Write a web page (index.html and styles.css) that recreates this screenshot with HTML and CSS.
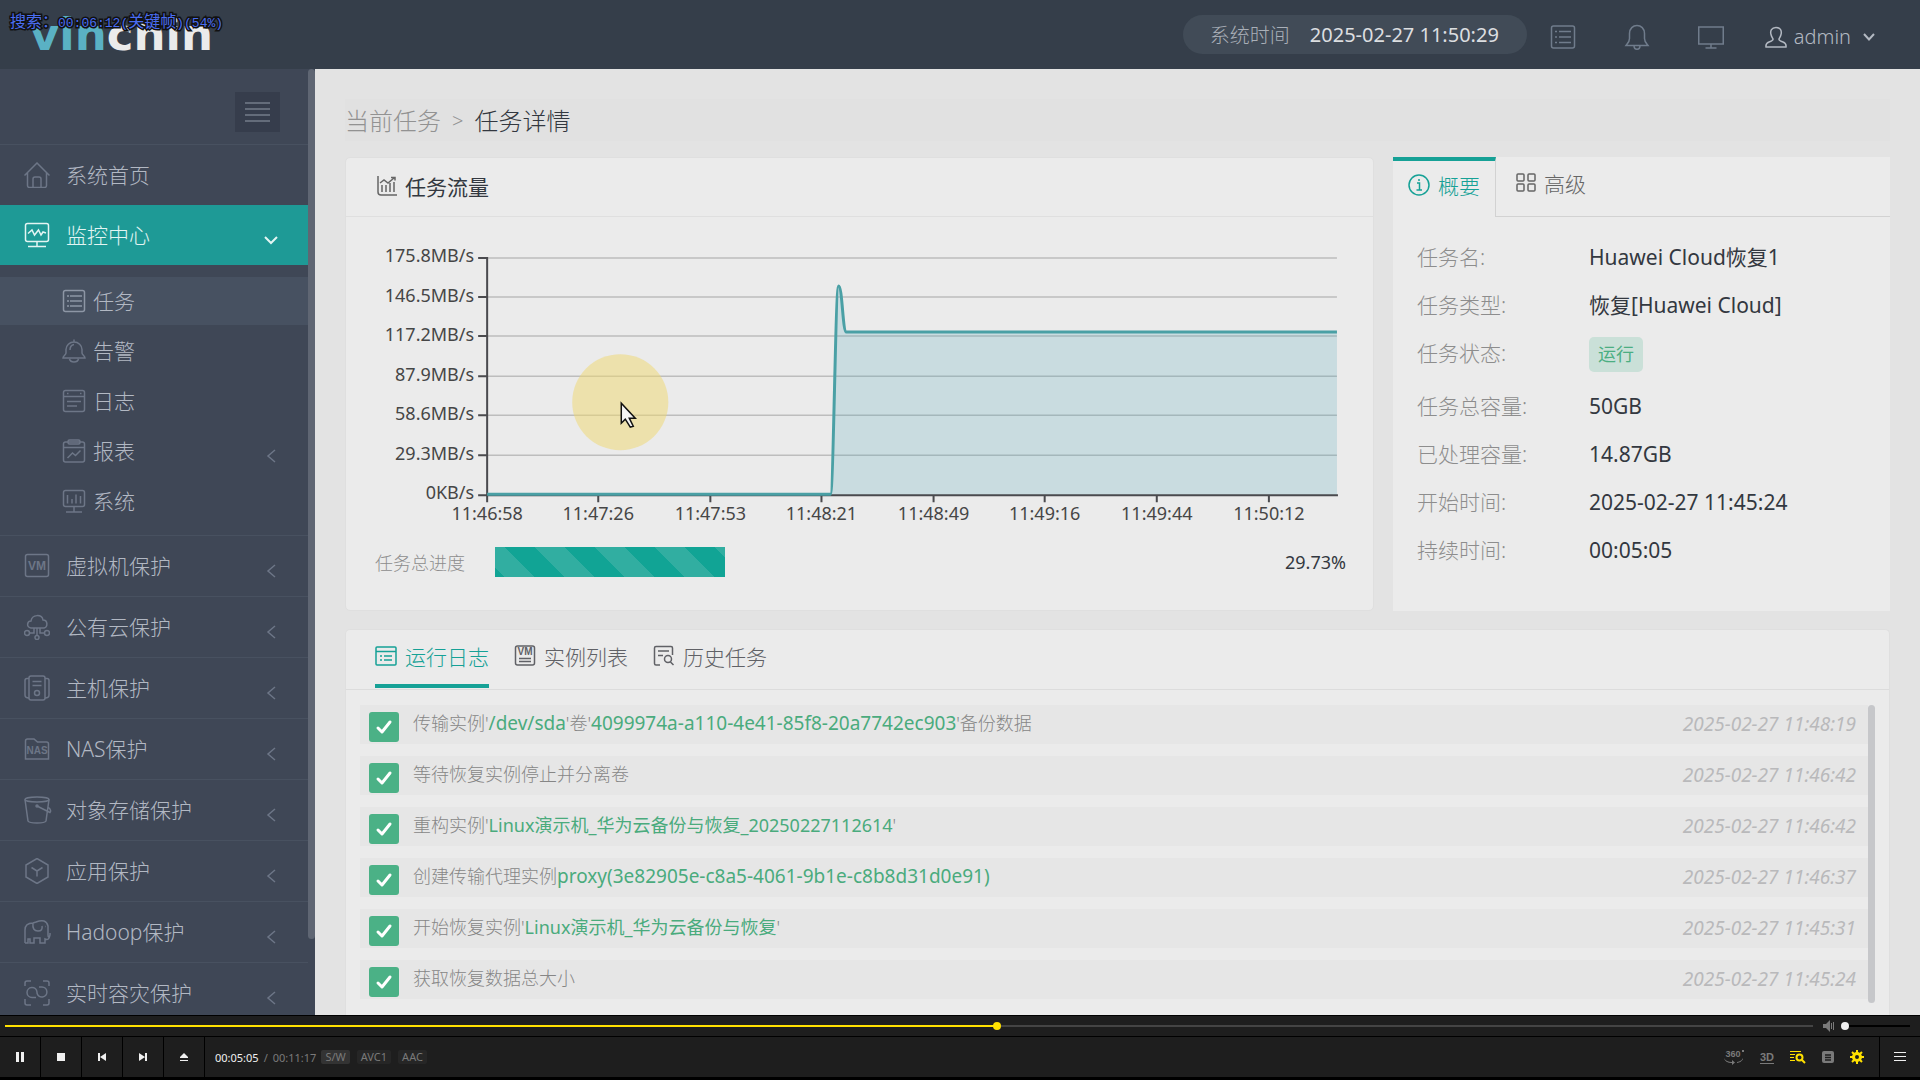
FILE: index.html
```html
<!DOCTYPE html>
<html lang="zh-CN">
<head>
<meta charset="utf-8">
<title>任务详情</title>
<link rel="stylesheet" href="styles.css">
</head>
<body>
<header class="topbar">
  <a class="logo" href="#"><span class="logo-a">vin</span>chin</a>
  <div class="clock"><span class="clock-label">系统时间</span><time>2025-02-27 11:50:29</time></div>
  <button class="icon-btn" aria-label="任务列表"><svg class="ico-26" viewBox="0 0 26 26"><rect x="1.5" y="2" width="23" height="22" rx="2"/><path d="M5 7.500h2M9 7.500h12M5 13h2M9 13h12M5 18.500h2M9 18.500h12"/></svg></button>
  <button class="icon-btn" aria-label="告警"><svg class="ico-26" viewBox="0 0 26 26"><path d="M2 21.500c1.500-2 3.500-3.500 3.500-7V9.500C5.500 4.500 9 1.500 13 1.500s7.500 3 7.500 8v5c0 3.500 2 5 3.500 7zM10 21.500c0 5 6 5 6 0"/></svg></button>
  <button class="icon-btn" aria-label="监控"><svg class="ico-26" viewBox="0 0 26 26"><rect x="0.750" y="3" width="24.500" height="17"/><path d="M13 20v3.500M7.500 24h11"/></svg></button>
  <button class="user"><svg class="ico-24" viewBox="0 0 24 24"><path d="M12 2.500c-4.500 0-6 3.500-5 7 .6 2.500 1.500 3.500 2 4.500.4 1.500-1 2-4 3-2.500 1-3.500 2-3 5h20c.5-3-.5-4-3-5-3-1-4.400-1.500-4-3 .5-1 1.400-2 2-4.500 1-3.500-.5-7-5-7z"/></svg><span>admin</span><svg class="ico-12" viewBox="0 0 12 12"><path d="M1 3l5 5.500L11 3"/></svg></button>
</header>
<div class="shell">
  <aside class="sidebar">
    <nav class="menu">
      <div class="toggle-row"><button class="toggle" aria-label="折叠菜单"><svg viewBox="0 0 25 22"><path d="M0 2h25M0 8h25M0 14h25M0 20h25"/></svg></button></div>
      <a class="item first" href="#"><svg class="ico-26" viewBox="0 0 26 26"><path d="M.5 13.500L13 1l12.500 12.500M3.500 11v12.500a2 2 0 0 0 2 2h15a2 2 0 0 0 2-2V11M9 25.500V17q0-2 2-2h4q2 0 2 2v8.500"/></svg><span>系统首页</span></a>
      <a class="item active" href="#"><svg class="ico-26" viewBox="0 0 26 26"><rect x="1.500" y="1.500" width="23" height="18" rx="2"/><path d="M4 11.500l4-3.500 2.500 5 4-5 2.500 5 2-3 3 1M13 19.500V24M4 24.500h18"/></svg><span>监控中心</span><svg class="chev" viewBox="0 0 14 14"><path d="M1 4l6 6 6-6"/></svg></a>
      <div class="submenu">
        <a class="sub current" href="#"><svg class="ico-24" viewBox="0 0 24 24"><rect x="1.500" y="1.500" width="21" height="21" rx="2"/><path d="M5 7h2M8 7h12M5 12h2M8 12h12M5 17h2M8 17h12"/></svg><span>任务</span></a>
        <a class="sub" href="#"><svg class="ico-24" viewBox="0 0 24 24"><path d="M12 .5V3M4 14v-3.500a8 7.500 0 0 1 16 0V14c0 2 3 2.500 3 5H1c0-2.500 3-3 3-5zM7.500 20c1 4 8 4 9 0M8 11c0-3 1-5 4-5.500"/></svg><span>告警</span></a>
        <a class="sub" href="#"><svg class="ico-24" viewBox="0 0 24 24"><rect x="1.500" y="1.500" width="21" height="21" rx="2"/><path d="M1.500 7.500h21M5 4.500h1.500M18 4.500h1.500M5 12.500h14M5 17h10"/></svg><span>日志</span></a>
        <a class="sub" href="#"><svg class="ico-24" viewBox="0 0 24 24"><rect x="1.500" y="3" width="21" height="20" rx="2"/><rect x="6" y="1" width="12" height="4" rx="1.500"/><path d="M1.500 8.500h21M5.500 19l5-5 3 2.500 5-5"/></svg><span>报表</span><svg class="chev" viewBox="0 0 14 14"><path d="M11 1L4 7l7 6"/></svg></a>
        <a class="sub" href="#"><svg class="ico-24" viewBox="0 0 24 24"><rect x="1.500" y="1.500" width="21" height="16" rx="2"/><path d="M5.500 6v8.500M10 10v4.500M14 5.500v9M18.500 7v7.500M12 17.500V23M4 23h16"/></svg><span>系统</span></a>
      </div>
      <a class="item" href="#"><svg class="ico-26" viewBox="0 0 26 26"><rect x="1.500" y="1.500" width="23" height="22" rx="2"/><text x="13" y="17" class="ico-vm">VM</text></svg><span>虚拟机保护</span><svg class="chev" viewBox="0 0 14 14"><path d="M11 1L4 7l7 6"/></svg></a>
      <a class="item" href="#"><svg class="ico-26" viewBox="0 0 26 26"><path d="M7 14c-5-1-4-7 0-7C8 0 18 0 19 6c5 0 5 7 1 8zM13 14v7M10 14v5H6M16 14v5h4"/><circle cx="3" cy="19" r="2.500"/><circle cx="23" cy="19" r="2.500"/><circle cx="13" cy="23.500" r="2"/></svg><span>公有云保护</span><svg class="chev" viewBox="0 0 14 14"><path d="M11 1L4 7l7 6"/></svg></a>
      <a class="item" href="#"><svg class="ico-26" viewBox="0 0 26 26"><rect x="5" y="1" width="16" height="24" rx="2"/><path d="M5 3.500H3q-2 0-2 2V20q0 3 4 3M21 3.500h2q2 0 2 2V20q0 3-4 3M8.500 6.500h9M8.500 10.500h9"/><circle cx="13" cy="18" r="2.500"/></svg><span>主机保护</span><svg class="chev" viewBox="0 0 14 14"><path d="M11 1L4 7l7 6"/></svg></a>
      <a class="item" href="#"><svg class="ico-26" viewBox="0 0 26 26"><path d="M1.500 23V5q0-2 2-2H10l3.500 3h9q2 0 2 2v15z"/><text x="13" y="18" class="ico-nas">NAS</text></svg><span>NAS保护</span><svg class="chev" viewBox="0 0 14 14"><path d="M11 1L4 7l7 6"/></svg></a>
      <a class="item" href="#"><svg class="ico-28" viewBox="0 0 28 28"><ellipse cx="13" cy="3.500" rx="12" ry="2.500"/><path d="M1 3.500L4 25q1 2 9 2t9-2l3-21.500M13 10l13 6.500c1-1 1-3-1.500-5"/><circle cx="13" cy="10" r="1"/></svg><span>对象存储保护</span><svg class="chev" viewBox="0 0 14 14"><path d="M11 1L4 7l7 6"/></svg></a>
      <a class="item" href="#"><svg class="ico-26" viewBox="0 0 26 26"><path d="M13 .500L24 7v12l-11 6.500L2 19V7zM7.500 9.500L13 13l5.500-3.500M13 13v5.500"/></svg><span>应用保护</span><svg class="chev" viewBox="0 0 14 14"><path d="M11 1L4 7l7 6"/></svg></a>
      <a class="item" href="#"><svg class="ico-28" viewBox="0 0 28 28"><path d="M1 25V12q0-7 8-7l3-1q10-4 12 4v9q0 4 2 0v-2M26 17q-1 6-5 4v4h-5v-5h-6v5H6v-4H4v4H1M9 5q-1 8 5 8 5 0 4-5M21 8.500h.5"/></svg><span>Hadoop保护</span><svg class="chev" viewBox="0 0 14 14"><path d="M11 1L4 7l7 6"/></svg></a>
      <a class="item" href="#"><svg class="ico-26" viewBox="0 0 26 26"><path d="M1 6V3q0-2 2-2h4M19 1h4q2 0 2 2v3M1 19v4q0 2 2 2h4M19 25h4q2 0 2-2v-4M12 17.500H8a5 5 0 1 1 5-5.500v1a5 5 0 1 0 5-6h-3"/></svg><span>实时容灾保护</span><svg class="chev" viewBox="0 0 14 14"><path d="M11 1L4 7l7 6"/></svg></a>
    </nav>
    <div class="side-scroll"><div class="side-thumb"></div></div>
  </aside>
  <main class="content">
    <div class="crumbs"><a href="#">当前任务</a><span class="sep">&gt;</span><span class="here">任务详情</span></div>
    <div class="top-row">
      <section class="card">
        <h2 class="card-head"><svg class="ico-20" viewBox="0 0 20 20"><path d="M1 0v16q0 3 3 3h16M5 9v7M9 9v7M13 7v9M17 6v10M3 7l4-3 4 3 6-5M14 1.500h4v3"/></svg>任务流量</h2>
        <svg class="chart" viewBox="0 0 1026 312" role="img" aria-label="任务流量">
          <path class="grid" d="M141 41H990M141 80H990M141 119H990M141 159H990M141 198H990M141 238H990"/>
          <path class="area" d="M484 277C487 277 489 69 492 69C496 69 496 115 500 115H990V278H484Z"/>
          <path class="axis" d="M132 41h9M132 80h9M132 119h9M132 159h9M132 198h9M132 238h9M132 278H991M141 40V285M252 278v7M364 278v7M475 278v7M587 278v7M698 278v7M810 278v7M922 278v7"/>
          <path class="line" d="M141 277H484C487 277 489 69 492 69C496 69 496 115 500 115H990"/>
          <g class="ylab">
            <text x="128" y="45">175.8MB/s</text><text x="128" y="85">146.5MB/s</text><text x="128" y="124">117.2MB/s</text><text x="128" y="164">87.9MB/s</text><text x="128" y="203">58.6MB/s</text><text x="128" y="243">29.3MB/s</text><text x="128" y="282">0KB/s</text>
          </g>
          <g class="xlab">
            <text x="141" y="303">11:46:58</text><text x="252" y="303">11:47:26</text><text x="364" y="303">11:47:53</text><text x="475" y="303">11:48:21</text><text x="587" y="303">11:48:49</text><text x="698" y="303">11:49:16</text><text x="810" y="303">11:49:44</text><text x="922" y="303">11:50:12</text>
          </g>
          <circle class="halo" cx="274" cy="185" r="48"/>
          <path class="cursor" d="M275 186v20l4-4 5 8 3-1-4-8h6z"/>
        </svg>
        <div class="progress"><span class="progress-label">任务总进度</span><div class="track"><div class="fill" style="width:29.73%"></div></div><span class="pct">29.73%</span></div>
      </section>
      <section class="card side-card">
        <div class="tabs">
          <button class="tab on"><svg class="ico-22" viewBox="0 0 22 22"><circle cx="11" cy="11" r="10"/><path d="M9 9h2.500v7M8.500 16h5.500M11 5v2"/></svg>概要</button>
          <button class="tab"><svg class="ico-20" viewBox="0 0 20 20"><rect x="1" y="1" width="7" height="7" rx="1"/><rect x="12" y="1" width="7" height="7" rx="1"/><rect x="1" y="11" width="7" height="7" rx="1"/><rect x="12" y="11" width="7" height="7" rx="1"/></svg>高级</button>
        </div>
        <dl class="facts">
          <div><dt>任务名:</dt><dd>Huawei Cloud恢复1</dd></div>
          <div><dt>任务类型:</dt><dd>恢复[Huawei Cloud]</dd></div>
          <div class="status-row"><dt>任务状态:</dt><dd><span class="badge">运行</span></dd></div>
          <div><dt>任务总容量:</dt><dd>50GB</dd></div>
          <div><dt>已处理容量:</dt><dd>14.87GB</dd></div>
          <div><dt>开始时间:</dt><dd>2025-02-27 11:45:24</dd></div>
          <div><dt>持续时间:</dt><dd>00:05:05</dd></div>
        </dl>
      </section>
    </div>
    <section class="card logs">
      <div class="log-tabs">
        <button class="log-tab on"><svg class="ico-22" viewBox="0 0 22 22"><rect x="1" y="2" width="20" height="18" rx="1"/><path d="M1 6.500h20M5 11h2M9 11h8M5 15h2M9 15h8"/></svg>运行日志</button>
        <button class="log-tab"><svg class="ico-22" viewBox="0 0 22 22"><rect x="1.500" y="1" width="19" height="19" rx="2"/><text x="11" y="10" class="ico-vms">VM</text><path d="M5 13.500h12M5 16.500h12"/></svg>实例列表</button>
        <button class="log-tab"><svg class="ico-22" viewBox="0 0 22 22"><path d="M7 20H3q-1.500 0-1.500-1.500V3Q1.500 1.500 3 1.500h15q1.500 0 1.500 1.500v7M5 6h11M5 10.500h5M17.500 17l3 3"/><circle cx="15" cy="14" r="3.500"/></svg>历史任务</button>
      </div>
      <div class="log-wrap">
        <ul class="log-list">
          <li><span class="tick"><svg viewBox="0 0 30 30"><path d="M9 16l4 4 8-10"/></svg></span><p>传输实例'<em class="code">/dev/sda</em>'卷'<em class="code">4099974a-a110-4e41-85f8-20a7742ec903</em>'备份数据</p><time>2025-02-27 11:48:19</time></li>
          <li><span class="tick"><svg viewBox="0 0 30 30"><path d="M9 16l4 4 8-10"/></svg></span><p>等待恢复实例停止并分离卷</p><time>2025-02-27 11:46:42</time></li>
          <li><span class="tick"><svg viewBox="0 0 30 30"><path d="M9 16l4 4 8-10"/></svg></span><p>重构实例'<em>Linux演示机_华为云备份与恢复_20250227112614</em>'</p><time>2025-02-27 11:46:42</time></li>
          <li><span class="tick"><svg viewBox="0 0 30 30"><path d="M9 16l4 4 8-10"/></svg></span><p>创建传输代理实例<em class="code">proxy(3e82905e-c8a5-4061-9b1e-c8b8d31d0e91)</em></p><time>2025-02-27 11:46:37</time></li>
          <li><span class="tick"><svg viewBox="0 0 30 30"><path d="M9 16l4 4 8-10"/></svg></span><p>开始恢复实例'<em>Linux演示机_华为云备份与恢复</em>'</p><time>2025-02-27 11:45:31</time></li>
          <li><span class="tick"><svg viewBox="0 0 30 30"><path d="M9 16l4 4 8-10"/></svg></span><p>获取恢复数据总大小</p><time>2025-02-27 11:45:24</time></li>
        </ul>
        <div class="log-thumb"></div>
      </div>
    </section>
  </main>
</div>
<footer class="player">
  <div class="seek-row">
    <input class="seek" type="range" min="0" max="1000" value="549" aria-label="播放进度">
    <svg class="vol-ico" viewBox="0 0 12 12"><path d="M0 4h3l4-4v12L3 8H0zM8 3h1v6H8zM10 2h1v8h-1z"/></svg>
    <input class="volume" type="range" min="0" max="100" value="0" aria-label="音量">
  </div>
  <div class="controls">
    <button class="ctl" aria-label="暂停"><svg class="ico-10" viewBox="0 0 10 10"><path d="M1 0h3v10H1zM6 0h3v10H6z"/></svg></button>
    <button class="ctl" aria-label="停止"><svg class="ico-10" viewBox="0 0 10 10"><path d="M1 1h8v8H1z"/></svg></button>
    <button class="ctl" aria-label="上一个"><svg class="ico-10" viewBox="0 0 10 10"><path d="M1 1h2v8H1zM9 1v8L3 5z"/></svg></button>
    <button class="ctl" aria-label="下一个"><svg class="ico-10" viewBox="0 0 10 10"><path d="M7 1h2v8H7zM1 1v8l6-4z"/></svg></button>
    <button class="ctl" aria-label="打开"><svg class="ico-10" viewBox="0 0 10 10"><path d="M5 1l4 4v1H1V5zM1 8h8v1H1z"/></svg></button>
    <div class="times"><span class="now">00:05:05</span><span>/</span><span>00:11:17</span></div>
    <div class="tags"><span class="tag lit">S/W</span><span class="tag">AVC1</span><span class="tag">AAC</span></div>
    <div class="tools">
      <button aria-label="360度"><svg class="tool-20" viewBox="0 0 20 16"><text x="9" y="8" class="t360">360</text><rect x="18" y="1" width="2" height="2"/><path d="M0 9q2 4 8 4v-2l3 2.500L8 16v-2Q1 14 0 9zM13 13q5-1 6-4v1.500q-2 3-6 3.500z"/></svg></button>
      <button class="t3d">3D</button>
      <button aria-label="搜索列表"><svg class="tool-16" viewBox="0 0 16 14"><path fill="#ffe100" d="M0 1h11v1H0zM0 4h5v1H0zM0 7h4v1H0zM0 10h5v1H0z"/><g fill="none" stroke="#ffe100" stroke-width="2"><circle cx="9.500" cy="7.500" r="3"/><path class="stroked" d="M12 10l3 3"/></g></svg></button>
      <button aria-label="播放列表"><svg class="tool-12" viewBox="0 0 12 14"><rect y="1" width="12" height="12" rx="2"/><path d="M3 5h6M3 7.500h6M3 10h6" stroke="#1e1e1e"/></svg></button>
      <button aria-label="设置"><svg class="tool-14" viewBox="0 0 14 14"><g fill="none" stroke="#ffe100"><circle cx="7" cy="7" r="3.500" stroke-width="3"/><path stroke-width="2" d="M7 0v3M7 11v3M0 7h3M11 7h3M2 2l2 2M10 10l2 2M12 2l-2 2M2 12l2-2"/></g></svg></button>
    </div>
    <button class="ctl more" aria-label="菜单"><svg class="tool-12" viewBox="0 0 12 14"><path d="M0 2h12v1H0zM0 6h12v1H0zM0 10h12v1H0z"/></svg></button>
  </div>
</footer>
<div class="osd">搜索：<span>00:06:12(</span>关键帧<span>)(54%)</span></div>
</body>
</html>
```
FILE: styles.css
```css
* { box-sizing: border-box; }
body {
  margin: 0;
  height: 100vh;
  display: flex;
  flex-direction: column;
  overflow: hidden;
  background: #e3e3e3;
  color: #333840;
  font-family: "Noto Sans", "Noto Sans CJK SC", sans-serif;
  font-size: 20px;
  font-weight: 300;
}
button {
  margin: 0;
  padding: 0;
  border: 0;
  background: none;
  color: inherit;
  font: inherit;
}
a { color: inherit; text-decoration: none; }
svg { display: block; flex: none; fill: none; stroke: currentColor; stroke-width: 1.5; }
.ico-10 { width: 10px; height: 10px; }
.ico-12 { width: 12px; height: 12px; }
.ico-20 { width: 20px; height: 20px; }
.ico-22 { width: 22px; height: 22px; }
.ico-24 { width: 24px; height: 24px; }
.ico-26 { width: 26px; height: 26px; }
.ico-28 { width: 28px; height: 28px; }

/* top bar */
.topbar {
  flex: none;
  height: 69px;
  display: flex;
  align-items: center;
  padding: 0 45px 0 30px;
  background: #353e4a;
}
.logo {
  margin-right: auto;
  color: #ebebeb;
  font: bold 45px/60px "DejaVu Sans", sans-serif;
}
.logo-a { color: #5ab1c4; }
.clock {
  display: flex;
  align-items: center;
  gap: 20px;
  height: 39px;
  margin-right: 23px;
  padding: 0 28px 0 27px;
  border-radius: 20px;
  background: #414b57;
  color: #dcdee0;
  font-weight: 400;
}
.clock-label { color: #a9afb8; font-weight: 300; }
.icon-btn { margin: 4px 48px 0 0; color: #707c8c; }
.icon-btn + .user { margin-left: -8px; }
.user {
  display: flex;
  align-items: center;
  gap: 6px;
  margin-top: 4px;
  color: #b3b9c2;
}
.user span { margin-right: 6px; }
.user .ico-12 { stroke-width: 2; }

/* sidebar */
.shell { flex: 1; min-height: 0; display: flex; }
.sidebar {
  flex: none;
  width: 315px;
  display: flex;
  overflow: hidden;
  background: #3f4756;
  color: #b2b8c3;
}
.menu { flex: 1; font-size: 21px; }
.side-scroll { width: 7px; }
.side-thumb { height: 92%; border-radius: 4px; background: #5f6673; }
.toggle-row {
  height: 76px;
  display: flex;
  justify-content: flex-end;
  align-items: center;
  padding-right: 28px;
  border-bottom: 1px solid #485160;
}
.toggle {
  display: grid;
  place-items: center;
  width: 45px;
  height: 40px;
  margin-top: 10px;
  background: #363d4c;
  color: #646c7a;
}
.toggle svg { width: 25px; height: 22px; stroke-width: 2; }
.item {
  height: 61px;
  display: flex;
  align-items: center;
  gap: 16px;
  padding: 0 30px 0 24px;
  border-top: 1px solid #485160;
}
.item > span, .sub > span { flex: 1; padding-bottom: 2px; }
.item > svg, .sub > svg { color: #6d7687; }
.item .ico-28 { margin-right: -2px; }
.item.first, .item.active { height: 60px; border: 0; }
.item.active { background: #1e9a96; color: #e3f5f3; }
.item.active > svg { color: #e3f5f3; }
.item > .chev, .sub > .chev { width: 14px; height: 14px; margin-top: 10px; }
.item.active > .chev { stroke-width: 2; }
.submenu { display: grid; gap: 2px; padding: 12px 0 10px; }
.sub {
  height: 48px;
  display: flex;
  align-items: center;
  gap: 7px;
  padding: 0 30px 0 62px;
}
.sub.current { background: #475161; }
.sub.current svg { color: #8d96a5; }
.ico-vm, .ico-nas, .ico-vms {
  fill: currentColor;
  stroke: none;
  text-anchor: middle;
  font: bold 12px "Liberation Sans", sans-serif;
}
.ico-nas { font-size: 10px; }
.ico-vms { font-size: 10px; }

/* content */
.content {
  flex: 1;
  min-width: 0;
  display: flex;
  flex-direction: column;
  padding: 30px 30px 0;
  overflow: hidden;
}
.crumbs {
  flex: none;
  display: flex;
  align-items: center;
  gap: 11px;
  height: 42px;
  margin-bottom: 16px;
  padding-bottom: 2px;
  background: #e1e1e1;
  font-size: 24px;
}
.crumbs a { color: #929292; }
.sep { padding-top: 2px; color: #929292; font-size: 20px; }
.top-row {
  flex: none;
  display: grid;
  grid-template-columns: 1029fr 497fr;
  gap: 19px;
  margin-bottom: 18px;
}
.card {
  min-width: 0;
  border: 1px solid #dfdfdf;
  border-radius: 5px;
  background: #ebebeb;
}
.card-head {
  display: flex;
  align-items: center;
  gap: 8px;
  height: 59px;
  margin: 0;
  padding: 0 31px 2px;
  border-bottom: 1px solid #dfdfdf;
  font-size: 21px;
  font-weight: 400;
}
.card-head svg { color: #666; }
.chart { width: 100%; height: auto; }
.chart path, .chart circle { stroke: none; }
.chart .grid { stroke: #bdbdbd; stroke-width: 1.5; }
.chart .axis { stroke: #4a4a4e; stroke-width: 2; }
.chart .area { fill: rgba(65, 160, 180, .2); }
.chart .line { stroke: #4aa0a5; stroke-width: 3; }
.chart .halo { fill: rgba(240, 216, 110, .5); }
.chart .cursor { fill: #f5f5f5; stroke: #111; stroke-width: 1.5; }
.chart text { fill: #464646; stroke: none; font-size: 18px; font-weight: 400; }
.ylab { text-anchor: end; }
.xlab { text-anchor: middle; }
.progress {
  display: flex;
  align-items: center;
  margin: 18px 27px 33px 29px;
  font-size: 18px;
}
.progress-label { width: 120px; color: #8d8d8d; }
.track { flex: 1; margin-right: 15px; }
.fill {
  height: 30px;
  background-color: #11a495;
  background-image: linear-gradient(45deg, #31aea1 25%, transparent 25%, transparent 50%, #31aea1 50%, #31aea1 75%, transparent 75%);
  background-size: 60px 60px;
  background-position: -20px 0;
}
.pct { font-weight: 400; }

/* summary card */
.side-card { border: 0; border-radius: 0; }
.tabs { display: flex; height: 60px; font-size: 21px; }
.tab {
  display: flex;
  align-items: center;
  gap: 8px;
  padding: 0 20px 8px;
  border-bottom: 1px solid #d2d2d2;
  color: #666;
}
.tab:last-child { flex: 1; }
.tab.on {
  padding: 0 15px 8px;
  border-top: 4px solid #16a196;
  border-right: 1px solid #d2d2d2;
  border-bottom: 0;
  color: #16a196;
}
.facts { display: grid; gap: 16px; margin: 0; padding: 24px 24px; font-size: 21px; line-height: 32px; }
.facts div { display: flex; }
.facts dt { width: 172px; color: #8d8d8d; }
.facts dd { margin: 0; font-weight: 400; }
.facts .status-row { height: 37px; }
.badge {
  display: block;
  height: 35px;
  padding: 0 9px;
  border-radius: 5px;
  background: #cae0d8;
  color: #4bae82;
  font-size: 18px;
  line-height: 35px;
}

/* logs */
.logs { flex: 1; min-height: 0; border-bottom: 0; border-radius: 5px 5px 0 0; }
.log-tabs {
  display: flex;
  gap: 25px;
  height: 60px;
  padding: 0 29px;
  border-bottom: 1px solid #dcdcdc;
}
.log-tab {
  display: flex;
  align-items: center;
  gap: 8px;
  height: 58px;
  padding-bottom: 2px;
  border-bottom: 4px solid transparent;
  color: #606166;
  font-size: 21px;
}
.log-tab.on { border-color: #16a196; color: #16a196; }
.log-wrap { display: flex; padding: 15px 14px 0; }
.log-list { flex: 1; display: grid; gap: 12px; align-content: start; margin: 0; padding: 0; list-style: none; }
.log-list li {
  display: flex;
  align-items: center;
  height: 39px;
  padding: 0 12px 0 9px;
  background: #e6e6e6;
  font-size: 18px;
}
.tick {
  width: 30px;
  height: 30px;
  margin: 4px 14px 0 0;
  border-radius: 3px;
  background: #4bb186;
  color: #fff;
}
.tick svg { stroke-width: 3; stroke-linecap: round; stroke-linejoin: round; }
.log-list p { flex: 1; margin: 0; padding-bottom: 3px; color: #868686; line-height: 24px; }
.log-list em { color: #4aab7d; font-style: normal; font-weight: 400; }
.log-list .code { font-size: 19px; }
.log-list time { padding-bottom: 2px; color: #b9b9bb; font-size: 19px; font-style: italic; font-weight: 400; }
.log-thumb { width: 7px; height: 298px; border-radius: 4px; background: #c6c7ca; }

/* player */
.player {
  flex: none;
  padding-bottom: 3px;
  border-top: 1px solid #000;
  background: #000;
  color: #7a7a7a;
}
.seek-row {
  display: flex;
  align-items: center;
  height: 20px;
  padding: 0 10px 0 5px;
  background: #1e1e1e;
}
input[type=range] { appearance: none; height: 10px; margin: 0; background: none; }
.seek { flex: 1; }
.seek::-webkit-slider-runnable-track { height: 2px; background: linear-gradient(90deg, #ffe100 55%, #444 55%); }
.volume { width: 69px; }
.volume::-webkit-slider-runnable-track { height: 2px; background: #000; }
input[type=range]::-webkit-slider-thumb {
  appearance: none;
  width: 8px;
  height: 8px;
  margin-top: -3px;
  border-radius: 50%;
  background: #ffe100;
}
input.volume[type=range]::-webkit-slider-thumb { background: #f0f0f0; }
.vol-ico { width: 12px; height: 12px; margin: 0 6px 0 10px; }
.player svg { fill: currentColor; stroke: none; }
.controls {
  display: flex;
  align-items: center;
  height: 40px;
  margin-top: 1px;
  background: #1e1e1e;
  font-size: 11px;
  font-weight: 400;
}
.ctl {
  display: grid;
  place-items: center;
  width: 41px;
  height: 40px;
  border-right: 1px solid #000;
  color: #f0f0f0;
}
.ctl.more { border-right: 0; border-left: 1px solid #000; }
.times { display: flex; gap: 5px; margin-left: 10px; }
.now { color: #f0f0f0; }
.tags { display: flex; gap: 7px; margin-left: 5px; }
.tag { padding: 0 4px; border-radius: 2px; background: #262626; line-height: 14px; }
.tag.lit { background: #333; }
.tools { display: flex; align-items: center; gap: 16px; margin: 0 15px 0 auto; }
.tool-20 { width: 20px; height: 16px; }
.tool-16 { width: 16px; height: 14px; }
.tool-14 { width: 14px; height: 14px; }
.tool-12 { width: 12px; height: 14px; }
.t360 { text-anchor: middle; font: bold 9px "Liberation Sans", sans-serif; }
.t3d { border-bottom: 1px solid #7a7a7a; font: bold 11px/12px "Liberation Sans", sans-serif; }
.osd {
  position: absolute;
  top: 8px;
  left: 10px;
  color: #4a6df0;
  font: 400 16px/24px "Noto Sans CJK SC", sans-serif;
  white-space: nowrap;
  -webkit-text-stroke: 3px #111;
  paint-order: stroke fill;
}
.osd span { font-family: "Liberation Mono", monospace; font-size: 13px; }
```
